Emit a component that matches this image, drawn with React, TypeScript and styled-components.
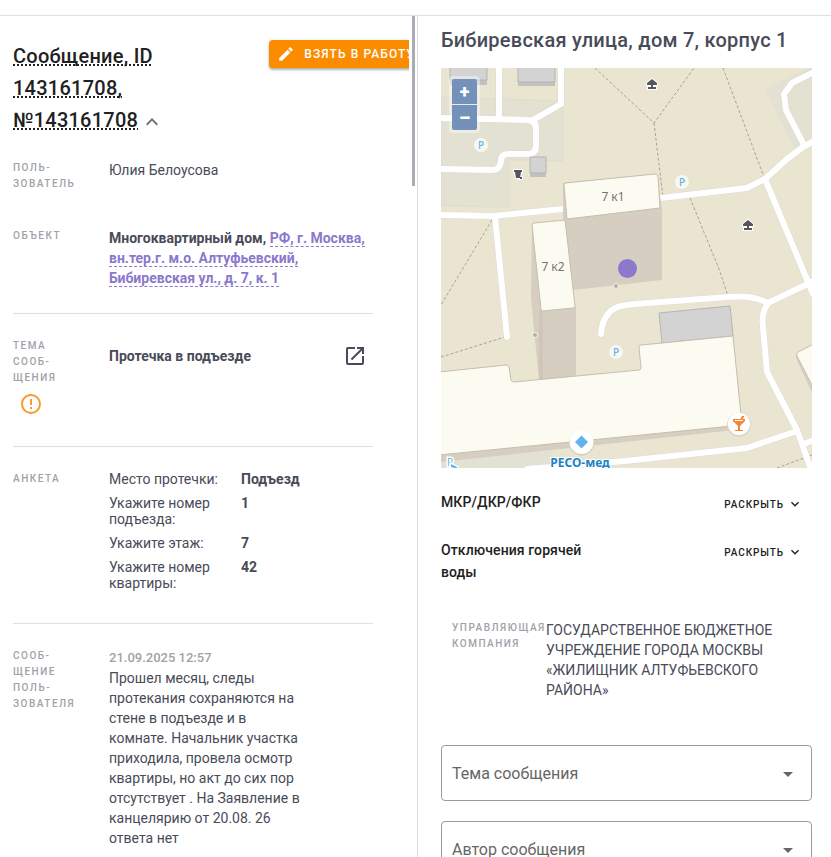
import React from "react";
import styled, { createGlobalStyle, css } from "styled-components";

const GlobalStyle = createGlobalStyle`
  *, *::before, *::after { box-sizing: border-box; }
  body {
    margin: 0;
    background: #fff;
    color: #484b58;
    font-family: Roboto, "Liberation Sans", sans-serif;
    font-size: 14px;
    line-height: 20px;
  }
  h1, h2, h3, p, dl, dd, dt { margin: 0; }
  button, select { font-family: inherit; }
`;

const Page = styled.div`
  display: flex;
  flex-direction: column;
  height: 100vh;
  overflow: hidden;
`;

const TopBar = styled.header`
  flex: none;
  height: 16px;
  border-bottom: 1px solid #e0e0e0;
`;

const Columns = styled.div`
  flex: 1;
  min-height: 0;
  display: grid;
  grid-template-columns: minmax(0, 418fr) minmax(0, 413fr);
`;

const MessagePane = styled.main`
  display: flex;
  min-height: 0;
  gap: 3px;
  padding-right: 2px;
  border-right: 1px solid #e0e0e0;
`;

const MessageScroll = styled.div`
  flex: 1;
  min-width: 0;
  overflow: hidden;
  padding: 24px 0 0 13px;
`;

const ScrollThumb = styled.div`
  flex: none;
  width: 3px;
  height: 170px;
  background: #a9acb2;
`;

const MessageHeader = styled.div`
  display: flex;
  align-items: flex-start;
  justify-content: space-between;
  height: 120px;
`;

const MessageTitle = styled.h1`
  width: 200px;
  color: #212121;
  font-size: 20px;
  font-weight: 500;
  line-height: 32px;
  letter-spacing: 0.0125em;
`;

const TitleText = styled.span`
  margin-right: 2px;
  text-decoration: underline dotted 2px;
  text-decoration-skip-ink: none;
`;

const IconButton = styled.button<{ $tone: string }>`
  display: inline-flex;
  vertical-align: middle;
  padding: 0;
  border: 0;
  background: none;
  color: ${(p) => p.$tone};
  cursor: pointer;
`;

const TakeButton = styled.button`
  flex: none;
  display: flex;
  align-items: center;
  gap: 9px;
  height: 28px;
  margin-right: -18px;
  padding: 0 12px 0 8px;
  border: 0;
  border-radius: 4px;
  background: #fb8c00;
  box-shadow: 0 2px 2px rgba(0, 0, 0, 0.22), 0 1px 4px rgba(0, 0, 0, 0.14);
  color: #fff;
  font-size: 12px;
  font-weight: 500;
  letter-spacing: 0.0893em;
  text-transform: uppercase;
  white-space: nowrap;
  cursor: pointer;
`;

const Section = styled.section<{ $divided?: boolean; $bottom?: number }>`
  display: grid;
  grid-template-columns: 96px minmax(0, 1fr);
  width: 100%;
  max-width: 360px;
  padding-bottom: ${(p) => p.$bottom ?? 24}px;
  ${(p) =>
    p.$divided &&
    css`
      padding-top: 24px;
      border-top: 1px solid #e0e0e0;
    `}
`;

const Caption = styled.h3`
  width: 68px;
  color: #a0a2a8;
  font-size: 10px;
  font-weight: 500;
  line-height: 16px;
  letter-spacing: 0.15em;
  text-transform: uppercase;
`;

const WarningMark = styled.div`
  display: flex;
  padding: 6px;
  color: #fb9a2c;
`;

const Strong = styled.strong`
  font-weight: 700;
`;

const AddressLink = styled.a`
  border-bottom: 1px dashed #8b79cd;
  color: #8b79cd;
  font-weight: 700;
  text-decoration: none;
`;

const TopicRow = styled.div`
  display: flex;
  align-items: center;
  justify-content: space-between;
  height: 36px;
  padding-right: 6px;
`;

const Answers = styled.dl`
  display: grid;
  grid-template-columns: 132px minmax(0, 1fr);
  row-gap: 8px;
  line-height: 16px;
`;

const Question = styled.dt`
  padding-right: 20px;
`;

const Answer = styled.dd`
  font-weight: 700;
`;

const MessageBody = styled.div`
  width: 194px;
`;

const Stamp = styled.time`
  display: block;
  color: #a0a2a8;
  font-weight: 500;
  font-size: 13px;
`;

const ObjectPane = styled.aside`
  min-height: 0;
  overflow: hidden;
  padding: 8px 19px 0 23px;
`;

const ObjectTitle = styled.h2`
  font-size: 20px;
  font-weight: 500;
  line-height: 32px;
  letter-spacing: 0.0125em;
`;

const MapFrame = styled.div`
  position: relative;
  height: 400px;
  margin: 12px 0 23px;
  overflow: hidden;
`;

const MapSvg = styled.svg`
  display: block;
  width: 100%;
  height: 100%;
  font-family: "Noto Sans", sans-serif;
`;

const ZoomControl = styled.div`
  position: absolute;
  top: 8px;
  left: 8px;
  display: grid;
  gap: 1px;
  padding: 3px;
  border-radius: 4px;
  background: rgba(255, 255, 255, 0.4);
`;

const ZoomButton = styled.button<{ $edge: "top" | "bottom" }>`
  display: flex;
  align-items: center;
  justify-content: center;
  width: 25px;
  height: 25px;
  padding: 0;
  border: 0;
  border-radius: ${(p) => (p.$edge === "top" ? "2px 2px 0 0" : "0 0 2px 2px")};
  background: #7491b9;
  color: #fff;
  font-size: 18px;
  font-weight: 900;
  line-height: 1;
  cursor: pointer;
`;

const ExpandRow = styled.div`
  display: flex;
  align-items: flex-start;
  justify-content: space-between;
  padding-right: 9px;
  min-height: 26px;
  margin-bottom: 22px;
`;

const ExpandTitle = styled.h3`
  width: 160px;
  color: #212121;
  font-size: 14px;
  font-weight: 500;
  line-height: 22px;
  letter-spacing: 0.0071em;
`;

const ExpandButton = styled.button`
  display: flex;
  align-items: center;
  gap: 3px;
  height: 26px;
  padding: 0;
  border: 0;
  background: none;
  color: #212121;
  font-size: 10px;
  font-weight: 500;
  letter-spacing: 0.0893em;
  text-transform: uppercase;
  cursor: pointer;
`;

const Company = styled.div`
  display: grid;
  grid-template-columns: 94px minmax(0, 1fr);
  padding: 15px 12px 45px 11px;
`;

const CompanyName = styled.p`
  max-width: 230px;
`;

const Field = styled.label`
  position: relative;
  display: block;
  margin-bottom: 20px;
  color: #666;
`;

const Select = styled.select`
  display: block;
  width: 100%;
  height: 56px;
  padding: 0 40px 0 10px;
  border: 1px solid #9b9b9b;
  border-radius: 4px;
  background: #fff;
  color: #666;
  font-size: 16px;
  appearance: none;
`;

const FieldArrow = styled.span`
  position: absolute;
  top: 17px;
  right: 12px;
  display: flex;
  pointer-events: none;
`;

const ICONS = {
  pencil:
    "M20.71,7.04C21.1,6.65 21.1,6 20.71,5.63L18.37,3.29C18,2.9 17.35,2.9 16.96,3.29L15.12,5.12L18.87,8.87M3,17.25V21H6.75L17.81,9.93L14.06,6.18L3,17.25Z",
  chevronUp: "M7.41,15.41L12,10.83L16.59,15.41L18,14L12,8L6,14L7.41,15.41Z",
  chevronDown: "M7.41,8.58L12,13.17L16.59,8.58L18,10L12,16L6,10L7.41,8.58Z",
  open: "M14,3V5H17.59L7.76,14.83L9.17,16.24L19,6.41V10H21V3M19,19H5V5H12V3H5C3.89,3 3,3.9 3,5V19A2,2 0 0,0 5,21H19A2,2 0 0,0 21,19V12H19V19Z",
  alert:
    "M11,15H13V17H11V15M11,7H13V13H11V7M12,2C6.47,2 2,6.5 2,12A10,10 0 0,0 12,22A10,10 0 0,0 22,12A10,10 0 0,0 12,2M12,20A8,8 0 0,1 4,12A8,8 0 0,1 12,4A8,8 0 0,1 20,12A8,8 0 0,1 12,20Z",
  menuDown: "M7,10L12,15L17,10H7Z",
};

function Icon({ name, size = 24 }: { name: keyof typeof ICONS; size?: number }) {
  return (
    <svg width={size} height={size} viewBox="0 0 24 24" fill="currentColor" aria-hidden="true">
      <path d={ICONS[name]} />
    </svg>
  );
}

const ROADS = [
  "M58,-4V50",
  "M-4,50L86,52Q95,52 95,61V77Q95,86 87,86H67Q60,86 60,93Q59,102 51,102L-4,101",
  "M120,-4V36L92,52",
  "M-4,147L52,148L122,141",
  "M54,148L66,269",
  "M220,130L306,120L324,111L346,91L362,79L375,72",
  "M363,77L345,42L343,26L351,15L375,3",
  "M324,111L362,202L372,226",
  "M160,266Q162,239 186,237L194,236L287,229Q312,227 327,235L375,212",
  "M327,235Q320,245 322,259L326,304L356,362L371,404",
  "M86,401L184,393L306,380L356,363",
  "M363,376L375,371",
];

const FOOTPATHS = [
  "M154,0L213,55L253,0",
  "M213,55L222,129",
  "M282,0L323,109",
  "M249,130L278,201L287,228",
  "M51,152L0,237",
  "M0,289L64,269",
  "M336,400L371,387",
];

const PARKINGS = [
  [40, 77],
  [241, 114],
  [175, 284],
];

const SHELTERS = [
  [211, 16],
  [307, 157],
];

function DistrictMap() {
  return (
    <MapSvg viewBox="0 0 371 400" preserveAspectRatio="xMidYMid slice" role="img" aria-label="Карта">
      <rect width="371" height="400" fill="#eae5d1" />
      <g fill="#e2e1d2">
        <path d="M0,29L122,33V93L68,92V139L0,138Z" stroke="#dad9c8" strokeDasharray="1 1" />
        <path d="M324,21L366,0H371V72L354,82Z" />
        <path d="M0,388L111,382V400H0Z" />
      </g>
      <g fill="none" stroke="#a8a48e" strokeDasharray="3 2">
        {FOOTPATHS.map((d) => (
          <path key={d} d={d} />
        ))}
      </g>
      <g fill="none" stroke="#dddbd2" strokeWidth="7" strokeLinecap="round" strokeLinejoin="round">
        {ROADS.map((d) => (
          <path key={d} d={d} />
        ))}
      </g>
      <g fill="none" stroke="#fff" strokeWidth="6" strokeLinecap="round" strokeLinejoin="round">
        {ROADS.map((d) => (
          <path key={d} d={d} />
        ))}
      </g>

      <g fill="#c3c1bf">
        <path d="M9,0H46V17H9ZM77,0H114V18H77ZM89,89H105V109H89Z" />
      </g>
      <g fill="#d3d3d3" stroke="#b4b4b6">
        <path d="M9,-1H46V12H9ZM77,-1H114V14H77ZM89,89H105V105H89Z" />
        <path d="M218,245L289,238L292,268L221,275Z" />
      </g>

      <g fill="#d6cec1">
        <path d="M122,115L216,106L221,141V212L132,222L122,151Z" />
        <path d="M91,155L90,230L98,312L135,308V240Z" />
        <path d="M98,242H102V312H98Z" fill="#cfc6b8" />
        <path d="M0,387L302,356V361L0,394Z" />
        <path d="M355,286L371,318V325L355,290Z" />
      </g>
      <g fill="#fcfbf2" stroke="#c7bdae" strokeLinejoin="round">
        <path d="M124,115L214,106Q216,106 217,108L219,140L126,151L123,117Z" />
        <path d="M93,155L124,152L134,238Q134,240 132,240L102,243Q100,243 100,241L91,157Q91,155 93,155Z" />
        <path d="M-2,304L65,297Q67,297 68,299L70,312Q71,314 73,314L198,302Q200,302 200,300L198,279Q198,277 200,277L221,275L292,268L301,357L-2,387Z" />
        <path d="M373,276L357,284Q355,286 356,288L373,321Z" />
      </g>

      <g fill="#b5b19f" stroke="#f6f3e6" strokeWidth="1">
        <circle cx="175" cy="218" r="2.5" />
        <circle cx="94" cy="267" r="2.5" />
      </g>

      {PARKINGS.map(([x, y]) => (
        <g key={`${x}-${y}`}>
          <circle cx={x} cy={y} r="7" fill="#f8f7f1" />
          <text x={x} y={y + 4} fill="#64b2ea" fontSize="10" fontWeight="500" textAnchor="middle">
            P
          </text>
        </g>
      ))}

      {SHELTERS.map(([x, y]) => (
        <path
          key={`${x}-${y}`}
          transform={`translate(${x} ${y})`}
          d="M-5,1V-1L0,-5L5,-1V1H1V3H4V5H-4V3H-1V1Z"
          fill="#55555a"
          stroke="#fff"
          strokeWidth="2"
          paintOrder="stroke"
        />
      ))}
      <path
        d="M73,102H81V104H80L79,110H75L74,104H73ZM79,109H81V111H79Z"
        fill="#55555a"
        stroke="#fff"
        strokeWidth="2"
        paintOrder="stroke"
      />

      <g fill="#76736c" fontSize="12" textAnchor="middle">
        <text x="172" y="133">7 к1</text>
        <text x="112" y="203">7 к2</text>
      </g>
      <circle cx="186.500" cy="200.500" r="9.500" fill="#8b79cd" />

      <circle cx="140.500" cy="375" r="12.500" fill="#d0cbbf" />
      <circle cx="140.500" cy="374" r="12" fill="#fff" />
      <path d="M140.500,367.500L147,374L140.500,380.500L134,374Z" fill="#64b2ea" />
      <text
        x="139"
        y="399"
        fill="#1c83c3"
        stroke="#fff"
        strokeWidth="2"
        paintOrder="stroke"
        fontSize="12"
        fontWeight="700"
        textAnchor="middle"
      >
        РЕСО-мед
      </text>

      <circle cx="298" cy="357" r="12" fill="#dcd6c8" />
      <circle cx="298" cy="356" r="11" fill="#fff" />
      <g fill="#f58634">
        <path d="M292,351H304V353L299,358V362H302V363H294V362H297V358L292,353ZM294,352V353H302V352Z" fillRule="evenodd" />
        <path d="M299,352L301,348L303,348V349L301,352Z" />
      </g>

      <g stroke="#fff" strokeWidth="3" paintOrder="stroke" fill="#64b2ea">
        <text x="6" y="398" fontSize="10">P</text>
        <path d="M10,396L16,399L17,401L10,399Z" />
      </g>
    </MapSvg>
  );
}

const QUESTIONS = [
  ["Место протечки:", "Подъезд"],
  ["Укажите номер подъезда:", "1"],
  ["Укажите этаж:", "7"],
  ["Укажите номер квартиры:", "42"],
];

const EXPANDABLES = ["МКР/ДКР/ФКР", "Отключения горячей воды"];
const FILTERS = ["Тема сообщения", "Автор сообщения"];

export default function App() {
  return (
    <>
      <GlobalStyle />
      <Page>
        <TopBar />
        <Columns>
          <MessagePane>
            <MessageScroll>
              <MessageHeader>
                <MessageTitle>
                  <TitleText>Сообщение, ID 143161708, №143161708</TitleText>
                  <IconButton type="button" $tone="#757575" aria-label="Свернуть">
                    <Icon name="chevronUp" />
                  </IconButton>
                </MessageTitle>
                <TakeButton type="button">
                  <Icon name="pencil" size={18} />
                  Взять в работу
                </TakeButton>
              </MessageHeader>

              <Section $bottom={36}>
                <Caption>Поль-зователь</Caption>
                <p>Юлия Белоусова</p>
              </Section>

              <Section $bottom={25}>
                <Caption>Объект</Caption>
                <p>
                  <Strong>Многоквартирный дом, </Strong>
                  <AddressLink href="#object">
                    РФ, г. Москва, вн.тер.г. м.о. Алтуфьевский, Бибиревская ул., д. 7, к. 1
                  </AddressLink>
                </p>
              </Section>

              <Section $divided>
                <div>
                  <Caption>Тема сооб-щения</Caption>
                  <WarningMark>
                    <Icon name="alert" />
                  </WarningMark>
                </div>
                <TopicRow>
                  <Strong>Протечка в подъезде</Strong>
                  <IconButton type="button" $tone="#484b58" aria-label="Открыть тему">
                    <Icon name="open" />
                  </IconButton>
                </TopicRow>
              </Section>

              <Section $divided $bottom={32}>
                <Caption>Анкета</Caption>
                <Answers>
                  {QUESTIONS.map(([question, answer]) => (
                    <React.Fragment key={question}>
                      <Question>{question}</Question>
                      <Answer>{answer}</Answer>
                    </React.Fragment>
                  ))}
                </Answers>
              </Section>

              <Section $divided>
                <Caption>Сооб-щение поль-зователя</Caption>
                <MessageBody>
                  <Stamp>21.09.2025 12:57</Stamp>
                  <p>
                    Прошел месяц, следы протекания сохраняются на стене в подъезде и в комнате. Начальник
                    участка приходила, провела осмотр квартиры, но акт до сих пор отсутствует . На Заявление в
                    канцелярию от 20.08. 26 ответа нет
                  </p>
                </MessageBody>
              </Section>
            </MessageScroll>
            <ScrollThumb />
          </MessagePane>

          <ObjectPane>
            <ObjectTitle>Бибиревская улица, дом 7, корпус 1</ObjectTitle>
            <MapFrame>
              <DistrictMap />
              <ZoomControl>
                <ZoomButton type="button" $edge="top" aria-label="Приблизить">
                  +
                </ZoomButton>
                <ZoomButton type="button" $edge="bottom" aria-label="Отдалить">
                  –
                </ZoomButton>
              </ZoomControl>
            </MapFrame>

            {EXPANDABLES.map((title) => (
              <ExpandRow key={title}>
                <ExpandTitle>{title}</ExpandTitle>
                <ExpandButton type="button">
                  Раскрыть
                  <Icon name="chevronDown" size={16} />
                </ExpandButton>
              </ExpandRow>
            ))}

            <Company>
              <Caption>Управляющая компания</Caption>
              <CompanyName>ГОСУДАРСТВЕННОЕ БЮДЖЕТНОЕ УЧРЕЖДЕНИЕ ГОРОДА МОСКВЫ «ЖИЛИЩНИК АЛТУФЬЕВСКОГО РАЙОНА»</CompanyName>
            </Company>

            {FILTERS.map((name) => (
              <Field key={name}>
                <Select aria-label={name} defaultValue="">
                  <option value="">{name}</option>
                </Select>
                <FieldArrow>
                  <Icon name="menuDown" />
                </FieldArrow>
              </Field>
            ))}
          </ObjectPane>
        </Columns>
      </Page>
    </>
  );
}
